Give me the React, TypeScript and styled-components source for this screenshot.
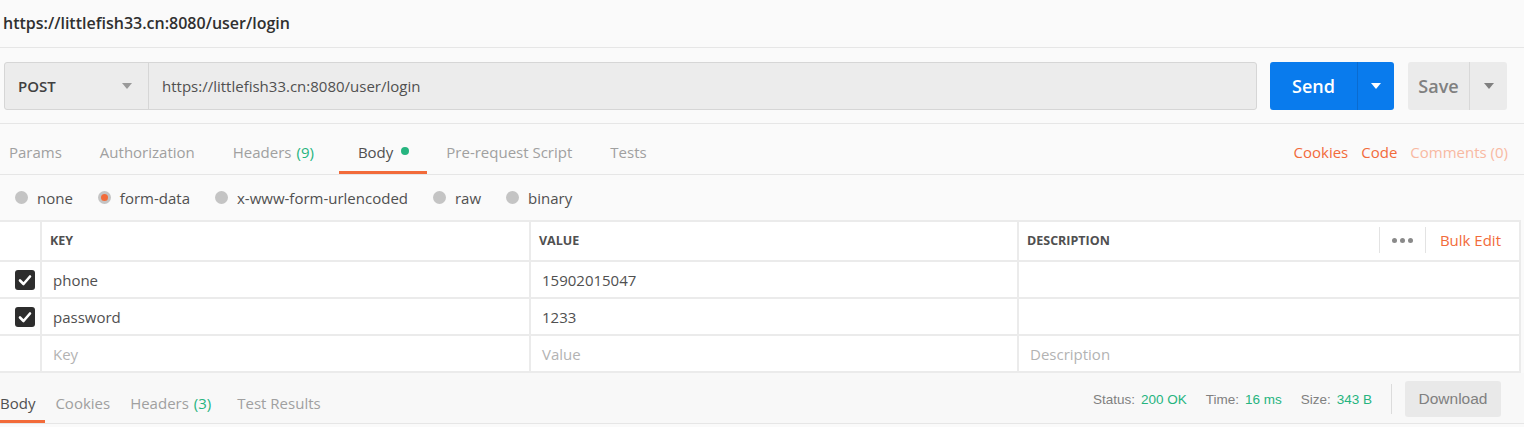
import React from "react";
import styled, { createGlobalStyle } from "styled-components";

const GlobalStyle = createGlobalStyle`
  html, body {
    margin: 0;
    padding: 0;
    background: #fafafa;
    font-family: "Open Sans", "Noto Sans", sans-serif;
    color: #505050;
  }
  * { box-sizing: border-box; }
`

const ORANGE = "#f26b3a";
const GREEN = "#26b47f";

const Page = styled.div`
  width: 1524px;
  height: 427px;
  overflow: hidden;
  background: #fafafa;
`
const TitleBar = styled.div`
  height: 48px;
  padding: 12px 3px 0;
  font-size: 16px;
  font-weight: 600;
  color: #303030;
  border-bottom: 1px solid #e6e6e6;
`
const RequestRow = styled.div`
  height: 76px;
  display: flex;
  align-items: center;
  padding: 0 17px 0 4px;
  border-bottom: 1px solid #e6e6e6;
`
const UrlBox = styled.div`
  flex: 1;
  height: 48px;
  display: flex;
  background: #ececec;
  border: 1px solid #d6d6d6;
  border-radius: 3px;
  margin-right: 13px;
`
const Method = styled.div`
  width: 144px;
  display: flex;
  align-items: center;
  justify-content: space-between;
  padding: 0 16px 0 13px;
  font-size: 15px;
  font-weight: 600;
  color: #404040;
  border-right: 1px solid #d6d6d6;
`
const Caret = styled.span<{ $color: string }>`
  width: 0;
  height: 0;
  border-left: 5px solid transparent;
  border-right: 5px solid transparent;
  border-top: 6px solid ${p => p.$color};
`
const UrlText = styled.div`
  flex: 1;
  display: flex;
  align-items: center;
  padding-left: 13px;
  font-size: 15px;
  color: #505050;
`
const SplitButton = styled.div<{ $bg: string; $fg: string; $line: string; $w: number; $main: number }>`
  width: ${p => p.$w}px;
  height: 48px;
  display: grid;
  grid-template-columns: ${p => p.$main}px 1fr;
  background: ${p => p.$bg};
  color: ${p => p.$fg};
  border-radius: 3px;
  font-size: 18px;
  font-weight: 600;
  & > div {
    display: flex;
    align-items: center;
    justify-content: center;
  }
  & > div + div {
    border-left: 1px solid ${p => p.$line};
  }
`
const SaveButton = styled(SplitButton)`
  margin-left: 14px;
`
const TabsRow = styled.div`
  height: 51px;
  display: flex;
  align-items: stretch;
  justify-content: space-between;
  border-bottom: 1px solid #e6e6e6;
`
const Tabs = styled.div`
  display: flex;
  align-items: stretch;
`
const Tab = styled.div<{ $active?: boolean; $left?: number; $right?: number }>`
  display: flex;
  align-items: center;
  padding: 8px ${p => p.$right ?? 19}px 0 ${p => p.$left ?? 19}px;
  font-size: 15px;
  color: ${p => (p.$active ? "#505050" : "#a0a0a0")};
  border-bottom: 3px solid ${p => (p.$active ? ORANGE : "transparent")};
`
const Count = styled.span`
  color: ${GREEN};
  margin-left: 5px;
`
const Dot = styled.span`
  width: 8px;
  height: 8px;
  border-radius: 50%;
  background: ${GREEN};
  margin-left: 8px;
  margin-bottom: 2px;
`
const Links = styled.div`
  display: flex;
  align-items: center;
  gap: 13px;
  padding: 6px 16px 0 0;
  font-size: 15px;
`
const Link = styled.span<{ $faded?: boolean }>`
  color: ${p => (p.$faded ? "#f8b9a2" : ORANGE)};
`
const RadioRow = styled.div`
  height: 45px;
  display: flex;
  align-items: center;
  gap: 25px;
  padding: 0 0 0 15px;
`
const RadioItem = styled.label`
  display: flex;
  align-items: center;
  gap: 9px;
  font-size: 15px;
  color: #505050;
`
const RadioCircle = styled.span<{ $on?: boolean }>`
  width: 13px;
  height: 13px;
  border-radius: 50%;
  background: #c4c4c4;
  display: flex;
  align-items: center;
  justify-content: center;
  &::after {
    content: "";
    width: 7px;
    height: 7px;
    border-radius: 50%;
    background: ${p => (p.$on ? ORANGE : "transparent")};
  }
`
const Table = styled.div`
  width: 1521px;
  display: grid;
  grid-template-columns: 40px 487px 486px 1fr;
  grid-template-rows: 38px 35px 35px 35px;
  gap: 2px;
  padding: 2px 2px 2px 0;
  background: #ebebeb;
`
const Cell = styled.div<{ $muted?: boolean }>`
  background: #fff;
  display: flex;
  align-items: center;
  padding: 0 9px 0 11px;
  font-size: 15px;
  color: ${p => (p.$muted ? "#b3b3b3" : "#505050")};
`
const HeadCell = styled(Cell)`
  padding: 0 9px 2px 8px;
  font-size: 12.5px;
  font-weight: 700;
  color: #505050;
  justify-content: space-between;
`
const CheckCell = styled(Cell)`
  justify-content: flex-end;
  padding: 0 5px 0 0;
`
const Checkbox = styled.span`
  width: 20px;
  height: 20px;
  border-radius: 3px;
  background: #2d2d2d;
  display: flex;
  align-items: center;
  justify-content: center;
`
const HeadTools = styled.div`
  display: flex;
  align-items: center;
  height: 100%;
  margin-right: 9px;
`
const Dots = styled.div`
  height: 26px;
  display: flex;
  align-items: center;
  gap: 3px;
  padding: 0 12px;
  border-left: 1px solid #e3e3e3;
  border-right: 1px solid #e3e3e3;
  margin-right: 14px;
  & > span {
    width: 5px;
    height: 5px;
    border-radius: 50%;
    background: #8a8a8a;
  }
`
const BulkEdit = styled.span`
  font-size: 15px;
  font-weight: 400;
  color: ${ORANGE};
`
const ResponseBar = styled.div`
  height: 51px;
  display: flex;
  align-items: stretch;
  justify-content: space-between;
  background: #f8f8f8;
  border-bottom: 1px solid #e6e6e6;
`
const ResTab = styled.div<{ $active?: boolean; $left?: number; $right?: number }>`
  display: flex;
  align-items: center;
  padding: 12px ${p => p.$right ?? 10}px 0 ${p => p.$left ?? 10}px;
  font-size: 15px;
  color: ${p => (p.$active ? "#505050" : "#a0a0a0")};
  border-bottom: 3px solid ${p => (p.$active ? ORANGE : "transparent")};
`
const Stats = styled.div`
  display: flex;
  align-items: center;
  padding: 2px 23px 0 0;
  font-family: "Liberation Sans", Arial, sans-serif;
  font-size: 13.5px;
`
const Stat = styled.span`
  color: #808080;
  margin-right: 19px;
  & > b {
    font-weight: 400;
    color: ${GREEN};
    margin-left: 6px;
  }
`
const Divider = styled.span`
  width: 1px;
  height: 30px;
  background: #dcdcdc;
  margin: 0 13px 0 0;
`
const Download = styled.div`
  width: 96px;
  height: 36px;
  border-radius: 3px;
  background: #e9e9e9;
  color: #808080;
  font-size: 15.5px;
  display: flex;
  align-items: center;
  justify-content: center;
`

const Check = () => (
  <svg width="14" height="12" viewBox="0 0 14 12">
    <path d="M2 6.5 L5.5 10 L12 2.5" stroke="#fff" strokeWidth="2.6" fill="none" strokeLinecap="round" strokeLinejoin="round" />
  </svg>
)

const rows = [
  { key: "phone", value: "15902015047" },
  { key: "password", value: "1233" },
]

export default function App() {
  return (
    <Page>
      <GlobalStyle />
      <TitleBar>https://littlefish33.cn:8080/user/login</TitleBar>
      <RequestRow>
        <UrlBox>
          <Method>
            POST
            <Caret $color="#9a9a9a" />
          </Method>
          <UrlText>https://littlefish33.cn:8080/user/login</UrlText>
        </UrlBox>
        <SplitButton $bg="#097bed" $fg="#fff" $line="#0a6bd0" $w={124} $main={87}>
          <div>Send</div>
          <div><Caret $color="#fff" /></div>
        </SplitButton>
        <SaveButton $bg="#ebebeb" $fg="#808080" $line="#d8d8d8" $w={99} $main={61}>
          <div>Save</div>
          <div><Caret $color="#808080" /></div>
        </SaveButton>
      </RequestRow>
      <TabsRow>
        <Tabs>
          <Tab $left={9}>Params</Tab>
          <Tab>Authorization</Tab>
          <Tab $right={25}>Headers<Count>(9)</Count></Tab>
          <Tab $active $right={18}>Body<Dot /></Tab>
          <Tab>Pre-request Script</Tab>
          <Tab>Tests</Tab>
        </Tabs>
        <Links>
          <Link>Cookies</Link>
          <Link>Code</Link>
          <Link $faded>Comments (0)</Link>
        </Links>
      </TabsRow>
      <RadioRow>
        <RadioItem><RadioCircle />none</RadioItem>
        <RadioItem><RadioCircle $on />form-data</RadioItem>
        <RadioItem><RadioCircle />x-www-form-urlencoded</RadioItem>
        <RadioItem><RadioCircle />raw</RadioItem>
        <RadioItem><RadioCircle />binary</RadioItem>
      </RadioRow>
      <Table>
        <Cell />
        <HeadCell>KEY</HeadCell>
        <HeadCell>VALUE</HeadCell>
        <HeadCell>
          DESCRIPTION
          <HeadTools>
            <Dots><span /><span /><span /></Dots>
            <BulkEdit>Bulk Edit</BulkEdit>
          </HeadTools>
        </HeadCell>
        {rows.map(r => (
          <React.Fragment key={r.key}>
            <CheckCell><Checkbox><Check /></Checkbox></CheckCell>
            <Cell>{r.key}</Cell>
            <Cell>{r.value}</Cell>
            <Cell />
          </React.Fragment>
        ))}
        <Cell />
        <Cell $muted>Key</Cell>
        <Cell $muted>Value</Cell>
        <Cell $muted>Description</Cell>
      </Table>
      <ResponseBar>
        <Tabs>
          <ResTab $active $left={0}>Body</ResTab>
          <ResTab>Cookies</ResTab>
          <ResTab $right={16}>Headers<Count>(3)</Count></ResTab>
          <ResTab>Test Results</ResTab>
        </Tabs>
        <Stats>
          <Stat>Status:<b>200 OK</b></Stat>
          <Stat>Time:<b>16 ms</b></Stat>
          <Stat>Size:<b>343 B</b></Stat>
          <Divider />
          <Download>Download</Download>
        </Stats>
      </ResponseBar>
    </Page>
  );
}
